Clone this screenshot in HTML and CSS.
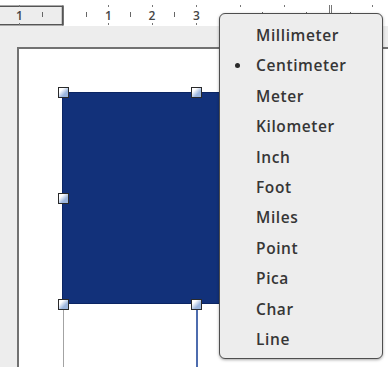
FILE: index.html
```html
<!DOCTYPE html>
<html>
<head>
<meta charset="utf-8">
<link rel="stylesheet" href="styles.css">
</head>
<body>
<div class="screen">
  <div class="ruler">
    <svg class="ruler-svg" width="388" height="26" viewBox="0 0 388 26">
      <rect x="-2" y="6.25" width="64.5" height="18.5" fill="#ededed" stroke="#555" stroke-width="1.5"/>
      <line x1="63" y1="5.5" x2="63" y2="25.5" stroke="#555" stroke-width="1.5"/>
      <g stroke="#666" stroke-width="1">
        <line x1="42.5" y1="12" x2="42.5" y2="17"/>
        <line x1="86.5" y1="12" x2="86.5" y2="17"/>
        <line x1="130.5" y1="12" x2="130.5" y2="17"/>
        <line x1="174.5" y1="12" x2="174.5" y2="17"/>
        <line x1="262.5" y1="12" x2="262.5" y2="17"/>
        <line x1="306.5" y1="12" x2="306.5" y2="17"/>
        <line x1="350.5" y1="12" x2="350.5" y2="17"/>
      </g>
      <g stroke="#777" stroke-width="1">
        <line x1="19.5" y1="5" x2="19.5" y2="7"/>
        <line x1="19.5" y1="23" x2="19.5" y2="25"/>
        <line x1="108.5" y1="5" x2="108.5" y2="7"/>
        <line x1="108.5" y1="23" x2="108.5" y2="25"/>
        <line x1="152.5" y1="5" x2="152.5" y2="7"/>
        <line x1="152.5" y1="23" x2="152.5" y2="25"/>
        <line x1="196.5" y1="5" x2="196.5" y2="7"/>
        <line x1="196.5" y1="23" x2="196.5" y2="25"/>
        <line x1="240.5" y1="5" x2="240.5" y2="7"/>
        <line x1="284.5" y1="5" x2="284.5" y2="7"/>
        <line x1="372.5" y1="5" x2="372.5" y2="7"/>
        <line x1="329.5" y1="5" x2="329.5" y2="15"/>
        <line x1="331.5" y1="5" x2="331.5" y2="15"/>
      </g>
      <g class="ruler-num" text-anchor="middle">
        <text x="19.5" y="19.5">1</text>
        <text x="108.5" y="19.5">1</text>
        <text x="152" y="19.5">2</text>
        <text x="196.5" y="19.5">3</text>
      </g>
    </svg>
  </div>
  <div class="workspace">
    <div class="page">
      <div class="shape"></div>
      <span class="guide guide-gray"></span>
      <span class="guide guide-blue"></span>
      <span class="handle handle-tl"></span>
      <span class="handle handle-tm"></span>
      <span class="handle handle-ml"></span>
      <span class="handle handle-bl"></span>
      <span class="handle handle-bm"></span>
    </div>
  </div>
  <ul class="menu">
    <li class="menu-item"><span class="mark"></span>Millimeter</li>
    <li class="menu-item"><span class="mark checked"></span>Centimeter</li>
    <li class="menu-item"><span class="mark"></span>Meter</li>
    <li class="menu-item"><span class="mark"></span>Kilometer</li>
    <li class="menu-item"><span class="mark"></span>Inch</li>
    <li class="menu-item"><span class="mark"></span>Foot</li>
    <li class="menu-item"><span class="mark"></span>Miles</li>
    <li class="menu-item"><span class="mark"></span>Point</li>
    <li class="menu-item"><span class="mark"></span>Pica</li>
    <li class="menu-item"><span class="mark"></span>Char</li>
    <li class="menu-item"><span class="mark"></span>Line</li>
  </ul>
</div>
</body>
</html>
```
FILE: styles.css
```css
html, body {
  margin: 0;
  padding: 0;
}
body {
  background: #ededed;
  font-family: "Open Sans", "DejaVu Sans", sans-serif;
}
.screen {
  position: relative;
  width: 388px;
  height: 367px;
  overflow: hidden;
  display: flex;
  flex-direction: column;
}
.ruler {
  flex: none;
  height: 26px;
  background: #ffffff;
}
.ruler-svg {
  display: block;
}
.ruler-num {
  font-family: "Open Sans", sans-serif;
  font-size: 12px;
  font-weight: 600;
  fill: #454545;
}
.workspace {
  flex: 1;
  display: flex;
  padding: 21px 0 0 17px;
}
.page {
  flex: 1;
  position: relative;
  background: #ffffff;
  border-left: 2px solid #727272;
  border-top: 2px solid #727272;
}
.shape {
  position: absolute;
  left: 43px;
  top: 43px;
  width: 270px;
  height: 212px;
  background: #12317a;
  box-shadow: inset 0 0 0 1px #0b2563;
}
.guide {
  position: absolute;
  top: 255px;
  bottom: 0;
}
.guide-gray {
  left: 44px;
  width: 1px;
  background: #a3a3a3;
}
.guide-blue {
  left: 177px;
  width: 2px;
  background: #4d6cae;
}
.handle {
  position: absolute;
  width: 11px;
  height: 11px;
  box-sizing: border-box;
  border: 1.5px solid #2a2a2a;
  background: linear-gradient(135deg, #ffffff 25%, #9cb6de 65%);
}
.handle-tl { left: 39px; top: 38px; }
.handle-tm { left: 172px; top: 38px; }
.handle-ml { left: 39px; top: 144px; }
.handle-bl { left: 39px; top: 250px; }
.handle-bm { left: 172px; top: 250px; }
.menu {
  position: absolute;
  left: 219px;
  top: 13px;
  width: 164px;
  height: 346px;
  box-sizing: border-box;
  margin: 0;
  padding: 5.8px 0 3.8px;
  list-style: none;
  background: #ededed;
  border: 1px solid #4e4e4e;
  border-radius: 6px;
  box-shadow: 0 1px 3px rgba(0, 0, 0, 0.35);
}
.menu-item {
  display: flex;
  align-items: center;
  height: 30.4px;
  font-family: "Open Sans", "DejaVu Sans", sans-serif;
  font-weight: 600;
  font-size: 15.5px;
  letter-spacing: 0.6px;
  color: #363636;
  white-space: nowrap;
}
.mark {
  flex: none;
  width: 36px;
  display: flex;
  align-items: center;
}
.mark.checked::before {
  content: "";
  width: 5px;
  height: 5px;
  margin-left: 15px;
  border-radius: 50%;
  background: #2a2a2a;
}
```
